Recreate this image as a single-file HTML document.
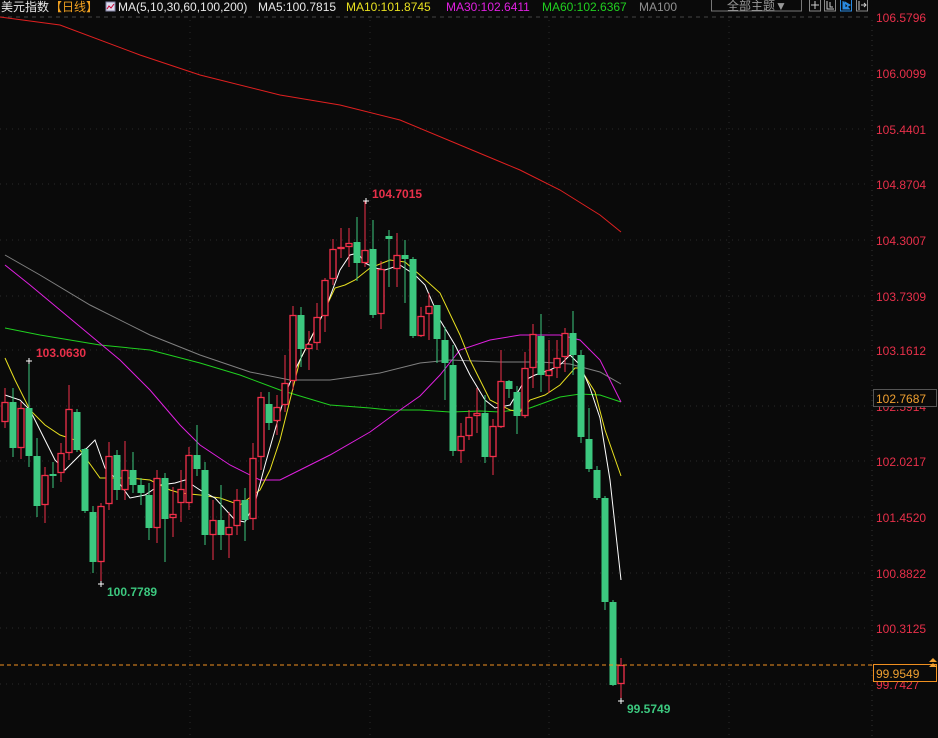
<!DOCTYPE html>
<html><head><meta charset="utf-8"><style>
html,body{margin:0;padding:0;background:#0a0a0a;width:938px;height:738px;overflow:hidden}
svg{display:block}
text{font-family:"Liberation Sans","Noto Sans CJK SC",sans-serif}
</style></head><body>
<svg id="s" width="938" height="738" xmlns="http://www.w3.org/2000/svg">
<rect width="938" height="738" fill="#0a0a0a"/>
<line x1="0" y1="17" x2="868" y2="17" stroke="#444" stroke-dasharray="4,4"/>
<g id="grid"></g>
<line x1="872" y1="20" x2="872" y2="738" stroke="#333" stroke-dasharray="1,4"/>
<g id="ma"></g>
<g id="c"></g>
<!-- top bar -->
<text x="1" y="11" font-size="12" fill="#e8e8e8">美元指数</text>
<text x="50" y="11" font-size="12" fill="#f0a020">【日线】</text>
<rect x="106" y="2" width="9" height="9" fill="#dde" stroke="#88a" stroke-width="1"/>
<polyline points="107,9 109,6 111,8 114,4" fill="none" stroke="#c03" stroke-width="1"/>
<text x="118" y="11" font-size="12" fill="#e8e8e8">MA(5,10,30,60,100,200)</text>
<text x="258" y="11" font-size="12" fill="#e8e8e8">MA5:100.7815</text>
<text x="346" y="11" font-size="12" fill="#e8e020">MA10:101.8745</text>
<text x="446" y="11" font-size="12" fill="#e020e0">MA30:102.6411</text>
<text x="542" y="11" font-size="12" fill="#20d020">MA60:102.6367</text>
<text x="639" y="11" font-size="12" fill="#909090">MA100</text>
<rect x="711.5" y="-1" width="90" height="12" fill="none" stroke="#777"/>
<text x="727" y="10" font-size="12" fill="#999">全部主题▼</text>
<rect x="809.5" y="-1" width="11" height="12" fill="none" stroke="#888"/>
<rect x="824.5" y="-1" width="11" height="12" fill="none" stroke="#888"/>
<rect x="840.5" y="-1" width="11" height="12" fill="none" stroke="#2a8ae0"/>
<rect x="856.5" y="-1" width="11" height="12" fill="none" stroke="#888"/>
<path d="M815 1v8M811 5h8" stroke="#ccc"/>
<path d="M827 1v8h7M830 2v5h3" stroke="#ccc" fill="none"/>
<path d="M843 1v8h7M845 2l5 3-5 3z" stroke="#2a8ae0" fill="#2a8ae0"/>
<path d="M859 1v9M861 5h5M864 3l2 2-2 2" stroke="#ccc" fill="none"/>
<!-- axis labels -->
<g font-size="12" fill="#e8304a" id="ax"></g>
<!-- price lines -->
<line x1="0" y1="665" x2="872" y2="665" stroke="#f09020" stroke-dasharray="4,3"/>
<rect x="873.5" y="389.5" width="63" height="17" fill="#0a0a0a" stroke="#555"/>
<text x="876" y="403" font-size="12" fill="#f0a030">102.7687</text>
<rect x="873.5" y="664.5" width="63" height="17" fill="#0a0a0a" stroke="#f09020"/>
<text x="876" y="678" font-size="12" fill="#f0a030">99.9549</text>
<path d="M929 662l4-4 4 4zM929 667l4-4 4 4z" fill="#f0a030"/>
<!-- extreme labels -->
<g font-size="12" font-weight="bold">
<text x="36" y="357" fill="#e8304a">103.0630</text>
<text x="107" y="596" fill="#3cc87f">100.7789</text>
<text x="372" y="198" fill="#e8304a">104.7015</text>
<text x="627" y="713" fill="#3cc87f">99.5749</text>
</g>
<path d="M26 361h6M29 358v6M98 584h6M101 581v6M363 201h6M366 198v6M618 701h6M621 698v6" stroke="#fff"/>
</svg>
<script>
var NS="http://www.w3.org/2000/svg";
function el(p,t,a){var e=document.createElementNS(NS,t);for(var k in a)e.setAttribute(k,a[k]);p.appendChild(e);return e;}
var labs=[[17,"106.5796"],[73,"106.0099"],[129,"105.4401"],[184,"104.8704"],[240,"104.3007"],[296,"103.7309"],[350,"103.1612"],[406,"102.5914"],[461,"102.0217"],[517,"101.4520"],[573,"100.8822"],[628,"100.3125"],[684,"99.7427"]];
var g=document.getElementById("grid"),ax=document.getElementById("ax");
labs.forEach(function(l,i){if(i>0)el(g,"line",{x1:0,y1:l[0],x2:868,y2:l[0],stroke:"#2a2a2a","stroke-dasharray":"1,5"});
 var t=el(ax,"text",{x:876,y:l[0]+5});t.textContent=l[1];});
[190,370,549,729].forEach(function(x){el(g,"line",{x1:x,y1:20,x2:x,y2:738,stroke:"#2a2a2a","stroke-dasharray":"1,5"});});
var ma=document.getElementById("ma");
function pl(pts,c){el(ma,"polyline",{points:pts,fill:"none",stroke:c,"stroke-width":1});}
pl("0,17 60,25 140,55 200,75 280,95 340,105 400,120 460,145 520,170 560,190 600,215 621,232","#e02020");
pl("5,255 40,275 90,305 150,335 200,355 250,372 290,380 330,380 380,373 420,363 450,360 500,362 540,362 570,364 600,372 621,384","#808080");
pl("5,328 40,335 100,345 150,350 200,363 240,375 280,390 330,405 370,408 390,410 420,410 450,412 480,411 500,412 530,408 560,397 580,394 600,395 621,402","#20d020");
pl("5,265 30,285 60,310 90,335 120,360 150,390 180,425 200,445 230,465 260,480 280,480 300,470 330,455 370,432 400,410 420,396 440,375 460,350 490,340 520,335 560,335 580,340 600,360 621,402","#e020e0");
pl("5,358 15,380 30,410 45,425 60,435 75,440 80,450 100,478 130,478 150,480 170,490 180,493 200,495 220,498 240,505 260,490 270,470 280,440 290,400 300,360 320,320 335,288 345,285 355,280 370,268 390,260 405,262 420,275 440,293 460,335 470,360 480,380 490,400 510,410 520,412 530,400 545,395 560,385 575,368 580,368 595,392 605,430 621,476","#e8e020");
pl("5,395 20,400 30,410 45,440 55,460 65,470 80,455 95,440 105,468 117,480 130,498 145,495 160,485 175,483 185,480 200,490 215,498 235,520 245,522 255,503 265,465 275,430 285,395 295,370 310,340 325,310 340,270 350,255 358,253 365,263 375,268 385,270 400,265 415,275 425,285 440,320 455,345 470,375 485,400 495,408 510,405 525,380 535,375 550,370 560,365 570,355 580,365 590,388 600,418 610,480 621,580","#ffffff");
var C=[
[5,402,422,388,428,'r'],[13,402,448,388,457,'g'],[21,408,448,402,459,'r'],[29,408,456,360,467,'g'],
[37,456,506,438,517,'g'],[45,475,505,467,523,'r'],[53,474,476,462,488,'g'],[61,453,473,443,482,'r'],
[69,409,453,385,460,'r'],[77,412,450,409,452,'g'],[85,449,511,448,513,'g'],[93,512,562,506,573,'g'],
[101,506,562,503,585,'r'],[109,456,504,442,510,'r'],[117,455,490,450,500,'g'],[125,470,490,441,500,'r'],
[133,470,485,452,493,'g'],[141,485,493,478,505,'g'],[149,495,528,483,540,'g'],[157,478,528,470,543,'r'],
[165,478,519,473,562,'g'],[173,514,518,487,537,'r'],[181,489,503,470,522,'r'],[189,455,503,447,510,'r'],
[197,455,469,425,476,'g'],[205,470,535,462,545,'g'],[213,520,535,500,560,'r'],[221,520,535,485,550,'g'],
[229,527,535,512,558,'r'],[237,500,526,489,535,'r'],[245,500,520,488,541,'g'],[253,458,519,443,530,'r'],
[261,397,457,392,470,'r'],[269,404,423,392,430,'g'],[277,407,421,395,435,'r'],[285,383,405,355,412,'r'],
[293,315,381,306,390,'r'],[301,315,349,307,367,'g'],[309,344,349,331,370,'r'],[317,317,343,303,350,'r'],
[325,280,316,278,332,'r'],[333,249,279,239,285,'r'],[341,247,249,228,258,'r'],[349,243,247,228,267,'r'],
[357,242,263,217,281,'g'],[365,250,263,201,267,'r'],[373,249,315,220,318,'g'],[381,269,314,261,329,'r'],
[389,236,239,230,287,'g'],[397,255,269,233,287,'r'],[405,255,259,240,303,'g'],[413,259,336,257,338,'g'],
[421,316,336,307,337,'r'],[429,306,314,293,340,'r'],[437,305,339,305,363,'g'],[445,340,363,327,400,'g'],
[453,365,451,345,456,'g'],[461,436,451,423,463,'r'],[469,417,436,410,440,'r'],[477,413,416,388,433,'r'],
[485,413,457,395,463,'g'],[493,426,457,419,475,'r'],[501,381,427,350,428,'r'],[509,381,389,380,398,'g'],
[517,392,416,386,434,'g'],[525,368,416,352,418,'r'],[533,334,368,324,388,'r'],[541,336,375,314,392,'g'],
[549,370,376,340,393,'r'],[557,358,368,340,378,'r'],[565,333,357,328,372,'r'],[573,333,355,311,375,'g'],
[581,355,437,350,443,'g'],[589,439,469,408,472,'g'],[597,470,498,466,500,'g'],[605,498,602,496,610,'g'],
[613,602,685,600,686,'g'],[621,665,684,658,701,'r']];
var cg=document.getElementById("c");
C.forEach(function(d){var x=d[0],red=d[5]=='r',col=red?"#f0304a":"#3cc87f";
 el(cg,"line",{x1:x,y1:d[3],x2:x,y2:d[4],stroke:col,"stroke-width":1});
 if(red)el(cg,"rect",{x:x-3,y:d[1]+0.5,width:6,height:Math.max(1,d[2]-d[1]-1),fill:"#0a0a0a",stroke:col,"stroke-width":1.3});
 else el(cg,"rect",{x:x-3.5,y:d[1],width:7,height:Math.max(1,d[2]-d[1]),fill:col});
});
</script>
</body></html>
